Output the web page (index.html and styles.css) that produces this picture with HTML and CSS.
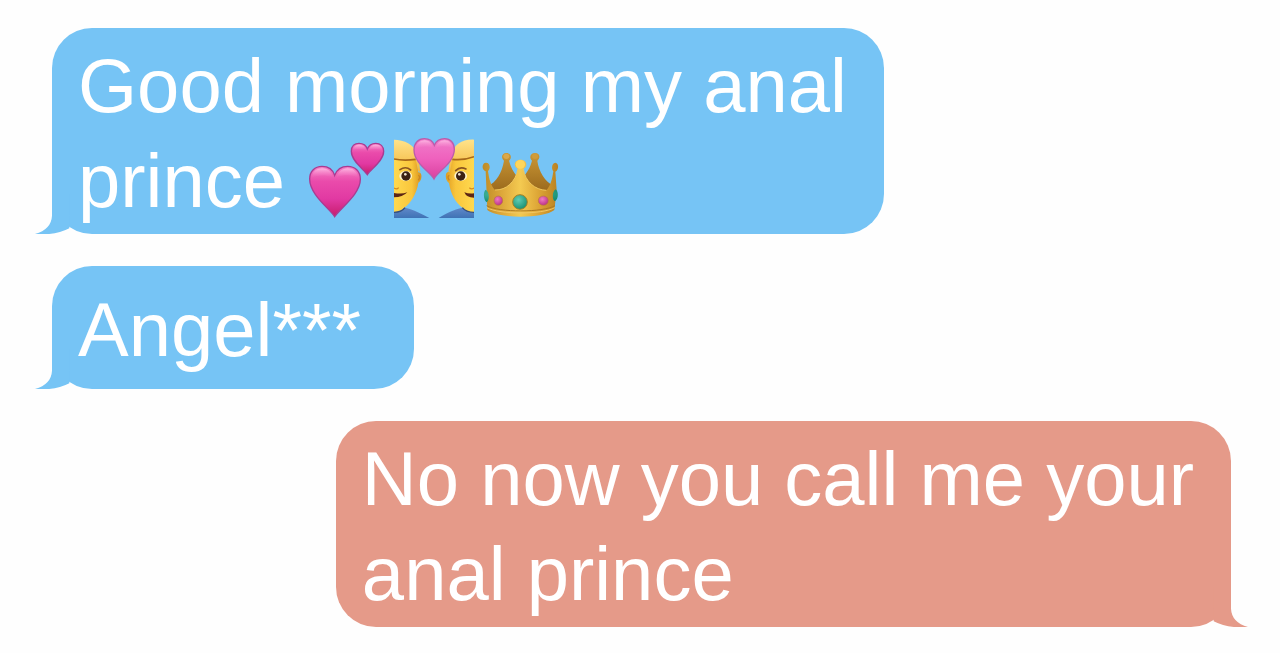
FILE: index.html
```html
<!DOCTYPE html>
<html lang="en">
<head>
    <meta charset="UTF-8">
    <meta name="viewport" content="width=device-width, initial-scale=1.0">
    <title>Messages</title>
    <link rel="stylesheet" href="styles.css">
</head>
<body>
    <main class="chat">
        <div class="bubble received">
            <p>Good morning my anal<br>prince
                <span class="emojis">
                    <svg class="emoji" viewBox="24 24 240 240" role="img" aria-label="Two hearts">
                        <defs>
                            <linearGradient id="pink" x1="0" y1="0" x2="0" y2="1">
                                <stop offset="0" stop-color="#f583c8"/>
                                <stop offset="0.3" stop-color="#ea4bab"/>
                                <stop offset="0.65" stop-color="#e139a2"/>
                                <stop offset="1" stop-color="#c71c6c"/>
                            </linearGradient>
                            <linearGradient id="shine" x1="0" y1="0" x2="0" y2="1">
                                <stop offset="0" stop-color="#ffc4e8" stop-opacity="0.8"/>
                                <stop offset="1" stop-color="#f77dc6" stop-opacity="0"/>
                            </linearGradient>
                        </defs>
                        <path d="M110 260C94 235 35 194 35 147C35 123 51 109 72 109C91 109 105 120 110 136C116 120 130 109 149 109C171 109 187 124 187 148C187 193 127 234 110 260Z" fill="url(#pink)" stroke="#a83c91" stroke-width="4"/>
                        <path d="M42 143C43 124 56 115 73 115C91 115 101 126 105 142C83 134 58 135 42 143ZM116 142C120 126 132 115 149 115C166 115 178 125 180 143C160 134 137 134 116 142Z" fill="url(#shine)"/>
                        <path d="M208 134C198 118 160 94 160 64C160 48 170 40 183 40C196 40 205 47 208 57C212 47 221 40 233 40C247 40 257 49 257 64C257 93 219 117 208 134Z" fill="url(#pink)" stroke="#a83c91" stroke-width="4"/>
                        <path d="M165 61C166 50 173 44 184 44C196 44 202 51 205 61C191 56 176 56 165 61ZM212 61C215 50 222 44 233 44C245 44 252 50 252 61C239 56 225 56 212 61Z" fill="url(#shine)"/>
                    </svg>
                    <svg class="emoji" viewBox="18 24 240 240" role="img" aria-label="Couple with heart">
                        <defs>
                            <linearGradient id="face" x1="0" y1="0" x2="1" y2="0">
                                <stop offset="0" stop-color="#ffd94f"/>
                                <stop offset="0.65" stop-color="#f9c63c"/>
                                <stop offset="1" stop-color="#d8921c"/>
                            </linearGradient>
                            <linearGradient id="face-right" x1="0" y1="0" x2="1" y2="0">
                                <stop offset="0" stop-color="#df9c22"/>
                                <stop offset="0.35" stop-color="#f9c63c"/>
                                <stop offset="1" stop-color="#ffd94f"/>
                            </linearGradient>
                            <linearGradient id="hair" x1="0" y1="0" x2="0" y2="1">
                                <stop offset="0" stop-color="#ffe38a"/>
                                <stop offset="1" stop-color="#f3b53c"/>
                            </linearGradient>
                            <linearGradient id="shirt" x1="0" y1="0" x2="0" y2="1">
                                <stop offset="0" stop-color="#6088c9"/>
                                <stop offset="1" stop-color="#3d71b4"/>
                            </linearGradient>
                            <linearGradient id="heart" x1="0" y1="0" x2="0" y2="1">
                                <stop offset="0" stop-color="#f07cca"/>
                                <stop offset="0.5" stop-color="#ef61bd"/>
                                <stop offset="1" stop-color="#d9419f"/>
                            </linearGradient>
                        </defs>
                        <path d="M18 235L51 233C74 238 106 253 124 264V266H18Z" fill="url(#shirt)"/>
                        <path d="M258 235L223 233C198 238 170 252 152 264V266H258Z" fill="url(#shirt)"/>
                        <path d="M18 78H84L91 127C104 124 103 153 91 158C86 190 70 218 47 234C39 243 29 246 18 247Z" fill="url(#face)"/>
                        <path d="M258 78H192L185 127C170 121 170 151 183 159C188 192 202 217 224 234C232 243 244 247 258 247Z" fill="url(#face-right)"/>
                        <path d="M18 247C31 247 43 244 51 233M258 247C243 247 231 243 223 233" fill="none" stroke="#344e7e" stroke-width="4"/>
                        <path d="M18 29C47 29 81 43 91 78L97 127L91 123L83 88C60 91 38 91 18 87Z" fill="url(#hair)"/>
                        <path d="M258 29C224 27 197 43 188 78L181 127L186 124L193 88C217 91 237 88 258 80Z" fill="url(#hair)"/>
                        <path d="M18 87C38 91 60 91 83 88M193 88C217 91 237 88 258 80" fill="none" stroke="#a8691a" stroke-width="5"/>
                        <path d="M36 119Q53 107 68 120M203 122Q216 108 234 117" fill="none" stroke="#8a5420" stroke-width="5" stroke-linecap="round"/>
                        <ellipse cx="53" cy="138" rx="19" ry="15" fill="#fff5cf"/>
                        <ellipse cx="218" cy="138" rx="19" ry="15" fill="#fff5cf"/>
                        <circle cx="54" cy="138" r="14" fill="#3b2213"/>
                        <circle cx="218" cy="138" r="14" fill="#3b2213"/>
                        <circle cx="52" cy="133" r="4" fill="#eee1cf"/>
                        <circle cx="214" cy="133" r="4" fill="#eee1cf"/>
                        <path d="M18 174Q26 180 32 173M258 174Q251 180 244 173" fill="none" stroke="#d48a21" stroke-width="4"/>
                        <path d="M18 189Q42 193 58 187Q44 202 18 202ZM258 190Q242 192 229 187Q235 203 258 203Z" fill="#5d2614"/>
                        <path d="M91 136Q99 139 91 151M184 136Q176 139 184 151" fill="none" stroke="#c98524" stroke-width="4"/>
                        <path d="M138 147C127 126 78 101 78 59C78 39 91 26 109 26C125 26 135 35 139 46C144 34 154 26 170 26C187 26 199 38 199 58C199 99 149 124 138 147Z" fill="url(#heart)" stroke="#ba5daa" stroke-width="4"/>
                        <path d="M84 56C85 39 96 31 110 31C126 31 132 42 136 54C118 47 98 48 84 56ZM143 54C147 40 155 31 170 31C184 31 192 40 194 56C179 47 160 47 143 54Z" fill="url(#shine)"/>
                    </svg>
                    <svg class="emoji" viewBox="18 -6 240 240" role="img" aria-label="Crown">
                        <defs>
                            <linearGradient id="gold" x1="0" y1="0" x2="1" y2="0">
                                <stop offset="0" stop-color="#bd8b27"/>
                                <stop offset="0.25" stop-color="#dda73a"/>
                                <stop offset="0.5" stop-color="#f4ca51"/>
                                <stop offset="0.75" stop-color="#dca435"/>
                                <stop offset="1" stop-color="#b98121"/>
                            </linearGradient>
                            <linearGradient id="gold-back" x1="0" y1="0" x2="0" y2="1">
                                <stop offset="0" stop-color="#cb9836"/>
                                <stop offset="1" stop-color="#98671b"/>
                            </linearGradient>
                            <radialGradient id="green" cx="0.4" cy="0.35" r="0.7">
                                <stop offset="0" stop-color="#60cdb4"/>
                                <stop offset="1" stop-color="#168d70"/>
                            </radialGradient>
                            <radialGradient id="ruby" cx="0.4" cy="0.35" r="0.7">
                                <stop offset="0" stop-color="#ef7bc3"/>
                                <stop offset="1" stop-color="#b92c85"/>
                            </radialGradient>
                        </defs>
                        <path d="M36 138C61 126 78 98 84 62C74 54 77 39 91 39C105 39 109 53 99 62C104 82 112 95 122 108L144 108C158 91 164 77 168 62C158 53 163 39 177 39C192 39 194 54 184 62C188 94 207 125 233 137L228 160H40Z" fill="url(#gold-back)"/>
                        <path d="M29 94C16 91 17 68 30 68C43 68 44 87 36 93C39 116 44 136 57 150C91 151 119 125 126 87C110 80 115 59 133 59C153 59 157 79 142 87C147 124 177 150 211 151C222 140 229 117 232 94C225 86 228 68 238 68C249 69 249 90 238 95L242 151L235 210C203 236 68 237 34 210Z" fill="url(#gold)"/>
                        <path d="M57 150C91 151 119 125 126 87M142 87C147 124 177 150 211 151" fill="none" stroke="#f0c75c" stroke-width="3"/>
                        <ellipse cx="133" cy="73" rx="14" ry="13" fill="#ffd65b"/>
                        <ellipse cx="91" cy="49" rx="9" ry="8" fill="#dba849"/>
                        <ellipse cx="177" cy="49" rx="9" ry="8" fill="#cf9c3a"/>
                        <path d="M32 197C68 218 201 218 237 197" fill="none" stroke="#ad7822" stroke-width="3"/>
                        <path d="M33 203C69 224 200 224 236 203" fill="none" stroke="#f1c766" stroke-width="3"/>
                        <path d="M29 149C40 155 42 179 32 187C22 180 21 155 29 149ZM239 148C248 154 248 177 237 184C227 177 229 154 239 148Z" fill="url(#green)"/>
                        <circle cx="132" cy="186" r="22" fill="url(#green)" stroke="#a88125" stroke-width="3"/>
                        <ellipse cx="67" cy="182" rx="13" ry="14" fill="url(#ruby)" stroke="#b87b3c" stroke-width="2"/>
                        <ellipse cx="202" cy="182" rx="15" ry="14" fill="url(#ruby)" stroke="#b87b3c" stroke-width="2"/>
                    </svg>
                </span>
            </p>
            <svg class="tail" viewBox="12 40 108 120" aria-hidden="true">
                <path d="M66 40V105Q64 146 15 160Q76 165 118 143V40Z"/>
            </svg>
        </div>

        <div class="bubble received">
            <p>Angel***</p>
            <svg class="tail" viewBox="12 40 108 120" aria-hidden="true">
                <path d="M66 40V105Q64 146 15 160Q76 165 118 143V40Z"/>
            </svg>
        </div>

        <div class="bubble sent">
            <p>No now you call me your<br>anal prince</p>
            <svg class="tail" viewBox="12 40 108 120" aria-hidden="true">
                <path d="M66 40V105Q64 146 15 160Q76 165 118 143V40Z"/>
            </svg>
        </div>
    </main>
</body>
</html>
```
FILE: styles.css
```css
* {
    box-sizing: border-box;
}
body {
    margin: 0;
    background-color: #fefefe;
    font-family: 'Liberation Sans', Arial, sans-serif;
}
.chat {
    display: flex;
    flex-direction: column;
    gap: 32px;
    padding: 28px 49px 24px 52px;
}
.bubble {
    position: relative;
    display: flex;
    align-items: center;
    min-width: 362px;
    min-height: 123px;
    padding: 10px 37px 6px 26px;
    border-radius: 40px;
    color: #fff;
    font-size: 76px;
    line-height: 95px;
}
.bubble p {
    margin: 0;
}
.received {
    align-self: flex-start;
    background-color: #76c4f5;
    fill: #76c4f5;
}
.sent {
    align-self: flex-end;
    background-color: #e59a89;
    fill: #e59a89;
}
.tail {
    position: absolute;
    bottom: 0;
    left: -18px;
    width: 36px;
    height: 40px;
}
.sent .tail {
    left: auto;
    right: -18px;
    transform: scaleX(-1);
}
.emojis {
    display: inline-flex;
    gap: 8px;
    height: 80px;
    vertical-align: -11px;
}
.emoji {
    width: 80px;
    height: 80px;
}
```
